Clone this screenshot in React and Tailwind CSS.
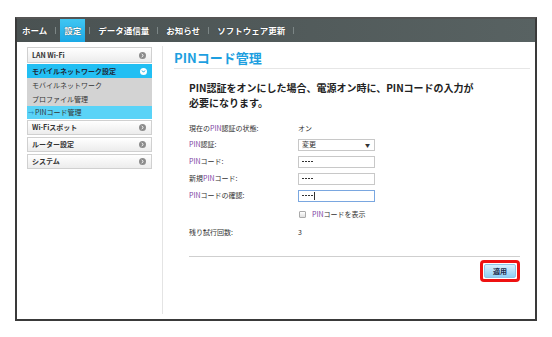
const jp = { fontFamily: '"Noto Sans CJK JP", "Noto Sans", sans-serif' };

function Dot({ open }) {
  if (open) {
    return (
      <span className="flex h-[7px] w-[7px] items-center justify-center rounded-full bg-white">
        <svg width="5" height="5" viewBox="0 0 5 5">
          <path d="M1 1.5 L2.5 3.2 L4 1.5" fill="none" stroke="#1aa8e0" strokeWidth="1" />
        </svg>
      </span>
    );
  }
  return (
    <span className="flex h-[7px] w-[7px] items-center justify-center rounded-full bg-[#8c8c8c]">
      <svg width="5" height="5" viewBox="0 0 5 5">
        <path d="M1.7 1 L3.3 2.5 L1.7 4" fill="none" stroke="#fff" strokeWidth="1" />
      </svg>
    </span>
  );
}

function SideItem({ label, h = "h-[15px]" }) {
  return (
    <div
      className={`flex ${h} items-center justify-between border border-[#d0d0d0] bg-gradient-to-b from-white to-[#ececec] pl-[4px] pr-[5px] text-[7px] font-bold text-[#333]`}
    >
      <span>{label}</span>
      <Dot />
    </div>
  );
}

const tabs = ["ホーム", "設定", "データ通信量", "お知らせ", "ソフトウェア更新"];

function Row({ label, children, y }) {
  return (
    <div className={`flex items-center ${y}`}>
      <div className="w-[109px] text-[7px] text-[#333]">{label}</div>
      <div className="text-[7px] text-[#333]">{children}</div>
    </div>
  );
}

function Pin({ children }) {
  return <span className="text-[#7a3fa0]">{children}</span>;
}

function Field({ focus }) {
  return (
    <div
      className={`flex h-[12px] w-[77px] items-center border bg-white pl-[3px] ${
        focus ? "border-[#7aa7e0]" : "border-[#c8c8c8]"
      }`}
    >
      <span className="flex gap-px">
        {[0, 1, 2, 3].map((i) => (
          <span key={i} className="h-px w-[2px] bg-[#333]" />
        ))}
      </span>
      {focus && <span className="ml-[1px] h-[8px] w-px bg-[#333]" />}
    </div>
  );
}

export default function App() {
  return (
    <div className="h-[337px] w-[552px] bg-white pl-[15px] pt-[17px]" style={jp}>
      <div className="flex h-[304px] w-[522px] flex-col border-2 border-[#3a3a3a] border-t-[#555] bg-white">
        <div className="flex h-[23px] items-stretch bg-gradient-to-r from-[#4a5252] to-[#586262] pl-[1px]">
          {tabs.map((t, i) => (
            <div key={t} className="flex items-center">
              <div
                className={`flex h-full items-center px-[4px] text-[8.5px] font-bold text-white ${
                  i === 1 ? "bg-gradient-to-b from-[#3fc6f2] to-[#1aa9e6]" : ""
                }`}
                style={{ textShadow: "0 0 1px #222" }}
              >
                {t}
              </div>
              <span className="mx-[4px] h-[7px] w-px bg-[#7c8686]" />
            </div>
          ))}
        </div>
        <div className="flex flex-1">
          <div className="ml-[10px] mt-[5px] flex w-[125px] flex-col">
            <SideItem label="LAN Wi-Fi" h="h-[16px]" />
            <div className="mt-px flex h-[14px] items-center justify-between bg-[#22bff3] pl-[5px] pr-[5px] text-[7px] font-bold text-[#1d2a3a]">
              <span>モバイルネットワーク設定</span>
              <Dot open />
            </div>
            <div className="flex h-[14px] items-center bg-[#d3d3d3] pl-[5px] text-[7px] text-[#333]">モバイルネットワーク</div>
            <div className="flex h-[14px] items-center bg-[#d3d3d3] pl-[5px] text-[7px] text-[#333]">プロファイル管理</div>
            <div className="flex h-[13px] items-center bg-[#5ad3f7] pl-[1px] text-[7px] text-[#333]">
              <span className="mr-px text-[6px] text-[#1a80c0]">→</span>PINコード管理
            </div>
            <div className="mt-px flex flex-col gap-[2px]">
              <SideItem label="Wi-Fiスポット" />
              <SideItem label="ルーター設定" />
              <SideItem label="システム" />
            </div>
          </div>
          <div className="ml-[10px] mt-[4px] mb-[5px] w-px bg-[#e4e4e4]" />
          <div className="flex flex-1 flex-col pl-[11px] pr-[5px]">
            <div className="mt-[8px] border-b border-[#e6e6e6] pb-[3px] text-[13px] font-bold leading-[15px] text-[#1e9fe0]">
              PINコード管理
            </div>
            <div className="pl-[15px]">
              <p className="mt-[11px] text-[10px] font-bold leading-[15px] text-[#222]">
                PIN認証をオンにした場合、電源オン時に、PINコードの入力が
                <br />
                必要になります。
              </p>
              <div className="mt-[10px] flex flex-col">
                <Row label={<>現在の<Pin>PIN</Pin>認証の状態:</>} y="h-[16px]">オン</Row>
                <Row label={<><Pin>PIN</Pin>認証:</>} y="h-[17px]">
                  <div className="flex h-[12px] w-[77px] items-center justify-between border border-[#c8c8c8] bg-white pl-[3px] pr-[4px]">
                    <span>変更</span>
                    <span className="text-[5px]">▼</span>
                  </div>
                </Row>
                <Row label={<><Pin>PIN</Pin>コード:</>} y="h-[17px]"><Field /></Row>
                <Row label={<>新規<Pin>PIN</Pin>コード:</>} y="h-[17px]"><Field /></Row>
                <Row label={<><Pin>PIN</Pin>コードの確認:</>} y="h-[17px]"><Field focus /></Row>
                <Row label="" y="h-[20px]">
                  <div className="flex items-center gap-[6px] pl-px">
                    <span className="h-[7px] w-[7px] rounded-[1px] border border-[#aaa] bg-gradient-to-b from-white to-[#e0e0e0]" />
                    <span><Pin>PIN</Pin>コードを表示</span>
                  </div>
                </Row>
                <Row label="残り試行回数:" y="h-[16px]">3</Row>
              </div>
            </div>
            <div className="ml-[15px] mr-[10px] mt-[16px] h-px bg-[#cfcfcf]" />
            <div className="mr-[10px] mt-[3px] flex justify-end">
              <div className="rounded-[4px] border-[3px] border-[#ee1111] p-px">
                <div className="flex h-[14px] w-[32px] items-center justify-center rounded-[2px] border border-[#8fc6e8] bg-gradient-to-b from-[#d8effc] to-[#8fd0f5] text-[7px] font-bold text-[#1a2a4a]">
                  適用
                </div>
              </div>
            </div>
          </div>
        </div>
      </div>
    </div>
  );
}
